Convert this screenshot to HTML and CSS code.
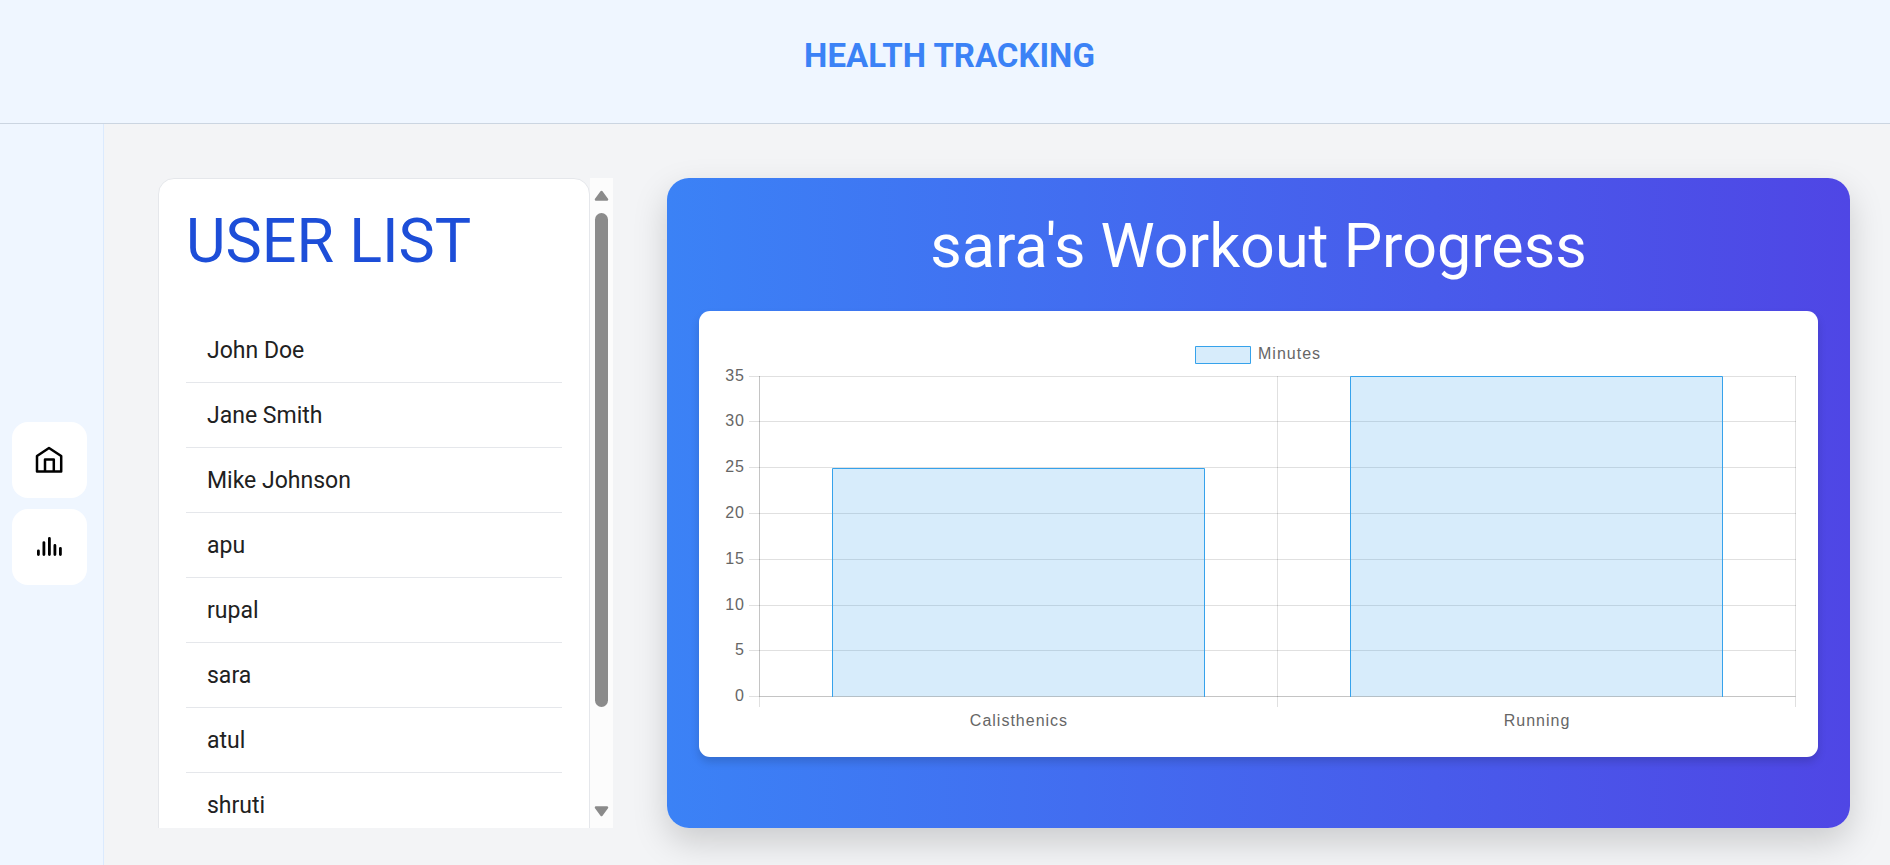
FILE: index.html
```html
<!DOCTYPE html>
<html lang="en">
<head>
<meta charset="utf-8">
<title>Health Tracking</title>
<link rel="stylesheet" href="styles.css">
</head>
<body>
<header class="topbar"><h1 class="brand">HEALTH TRACKING</h1></header>
<div class="shell">
  <nav class="sidebar" aria-label="Main">
    <button class="nav-btn" type="button" aria-label="Home">
      <svg width="29" height="29" viewBox="0 0 29 29" fill="none" stroke="#000" stroke-width="2.500" stroke-linejoin="round"><path d="M2 11 14 3l12.200 8v15.500H2zM10 26.500V14.500h8.800v12"/></svg>
    </button>
    <button class="nav-btn" type="button" aria-label="Statistics">
      <svg width="29" height="29" viewBox="0 0 29 29" fill="none" stroke="#000" stroke-width="2.800" stroke-linecap="round"><path d="M3.400 18.800v3.800M8.900 10.600v12M14.400 6.500v16.100M19.900 13.500v9.100M25.400 16.300v6.300"/></svg>
    </button>
  </nav>
  <main class="content">
    <section class="users">
      <div class="users-card">
        <h2 class="users-title">USER LIST</h2>
        <ul class="user-list">
          <li class="user">John Doe</li>
          <li class="user">Jane Smith</li>
          <li class="user">Mike Johnson</li>
          <li class="user">apu</li>
          <li class="user">rupal</li>
          <li class="user">sara</li>
          <li class="user">atul</li>
          <li class="user">shruti</li>
        </ul>
      </div>
      <div class="scrollbar" aria-hidden="true">
        <svg width="15" height="11" viewBox="0 0 15 11"><path d="M7.500 2 13 9.500H2z" fill="#8b8b8b" stroke="#8b8b8b" stroke-width="2.500" stroke-linejoin="round"/></svg>
        <div class="track"><div class="thumb"></div></div>
        <svg width="15" height="11" viewBox="0 0 15 11"><path d="M7.500 9 13 1.500H2z" fill="#8b8b8b" stroke="#8b8b8b" stroke-width="2.500" stroke-linejoin="round"/></svg>
      </div>
    </section>
    <section class="progress">
      <h2 class="progress-title">sara's Workout Progress</h2>
      <div class="chart-card">
        <svg class="chart" viewBox="0 0 1119 446" role="img" aria-label="Minutes per workout">
          <g class="grid">
            <path d="M50 65.500H1097M50 110.500H1097M50 156.500H1097M50 202.500H1097M50 248.500H1097M50 294.500H1097M50 339.500H1097M50 385.500H1097"/>
            <path d="M60.500 65V396M578.500 65V396M1096.500 65V396"/>
          </g>
          <path class="axis" d="M60.500 65V385.500H1096"/>
          <path class="bar-fill" d="M133.500 157.500h372v228h-372zM651.500 65.500h372v320h-372z"/>
          <path class="bar-line" d="M133.500 386V157.500H505.500V386M651.500 386V65.500H1023.500V386"/>
          <path class="bar-fill" d="M496.500 35.500h55v17h-55z"/>
          <path class="bar-line" d="M496.500 35.500h55v17h-55z"/>
          <g class="label">
            <text x="559" y="48">Minutes</text>
            <g text-anchor="end">
              <text x="46" y="70">35</text><text x="46" y="115">30</text><text x="46" y="161">25</text><text x="46" y="207">20</text><text x="46" y="253">15</text><text x="46" y="299">10</text><text x="46" y="344">5</text><text x="46" y="390">0</text>
            </g>
            <g text-anchor="middle"><text x="320" y="415">Calisthenics</text><text x="838" y="415">Running</text></g>
          </g>
        </svg>
      </div>
    </section>
  </main>
</div>
</body>
</html>
```
FILE: styles.css
```css
* { box-sizing: border-box; }
body {
  margin: 0;
  height: 100vh;
  display: flex;
  flex-direction: column;
  overflow: hidden;
  background: #f3f4f6;
  font-family: Roboto, "Liberation Sans", sans-serif;
}
h1, h2, ul { margin: 0; padding: 0; font-weight: 400; }
.topbar {
  padding: 32px 0 43px 9px;
  text-align: center;
  background: #eff6ff;
  border-bottom: 1px solid #cbd5e1;
}
.brand { font-size: 33px; line-height: 48px; font-weight: 700; color: #3b82f6; }
.shell { flex: 1; min-height: 0; display: flex; }
.sidebar {
  flex: none;
  display: flex;
  flex-direction: column;
  justify-content: center;
  gap: 11px;
  padding: 17px 16px 0 12px;
  background: #eff6ff;
  border-right: 1px solid #dbeafe;
}
.nav-btn {
  width: 75px;
  height: 76px;
  display: grid;
  place-items: center;
  padding: 0;
  border: 0;
  border-radius: 16px;
  background: #fff;
}
.content {
  flex: 1;
  min-width: 0;
  display: grid;
  grid-template-columns: minmax(0, 5fr) minmax(0, 13fr);
  grid-template-rows: minmax(0, 1fr);
  gap: 54px;
  padding: 54px 40px 37px 54px;
}
.users { display: flex; overflow: hidden; }
.users-card {
  flex: 1;
  align-self: flex-start;
  padding: 27px;
  background: #fff;
  border: 1px solid #e5e7eb;
  border-radius: 16px;
}
.users-title { font-size: 61px; line-height: 70px; margin-bottom: 42px; color: #1d4ed8; }
.user-list { list-style: none; }
.user {
  padding: 17px 21px 15px;
  font-size: 23px;
  line-height: 32px;
  color: #212121;
  border-bottom: 1px solid #e5e7eb;
}
.scrollbar {
  width: 23px;
  flex: none;
  display: flex;
  flex-direction: column;
  align-items: center;
  gap: 12px;
  padding: 12px 0 11px;
  background: #fcfcfc;
}
.track { flex: 1; }
.thumb { width: 13px; height: 85%; border-radius: 7px; background: #8b8b8b; }
.progress {
  padding: 32px;
  border-radius: 22px;
  background: linear-gradient(to right, #3b82f6, #4f46e5);
  box-shadow: 0 14px 34px rgba(0, 0, 0, 0.17);
}
.progress-title {
  font-size: 61px;
  line-height: 72px;
  margin-bottom: 29px;
  text-align: center;
  color: #fff;
}
.chart-card {
  border-radius: 11px;
  background: #fff;
  box-shadow: 0 5px 8px rgba(0, 0, 0, 0.15);
}
.chart { display: block; width: 100%; }
.grid { fill: none; stroke: rgba(0, 0, 0, 0.12); }
.axis { fill: none; stroke: rgba(0, 0, 0, 0.12); }
.bar-fill { fill: rgba(54, 162, 235, 0.2); }
.bar-line { fill: none; stroke: #36a2eb; stroke-width: 1px; }
.label { font: 16px "Liberation Sans", Arial, sans-serif; letter-spacing: 1px; fill: #666; }
```
